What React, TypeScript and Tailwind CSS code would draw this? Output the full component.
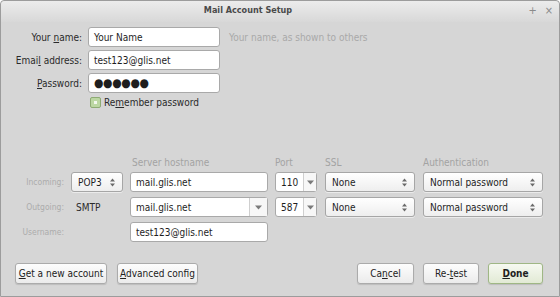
import React from "react";

const font = "font-['DejaVu_Sans_Condensed','Liberation_Sans',sans-serif]";

function UpDown() {
  return (
    <svg width="5" height="9" viewBox="0 0 5 9" aria-hidden="true">
      <path d="M2.5 0.5L5 3.5H0z" fill="#6a6a6a" />
      <path d="M2.5 8.5L5 5.5H0z" fill="#6a6a6a" />
    </svg>
  );
}

function Down() {
  return (
    <svg width="7" height="5" viewBox="0 0 7 5" aria-hidden="true">
      <path d="M0 0.5H7L3.5 4.5z" fill="#7a7a7a" />
    </svg>
  );
}

function Field({ value, className = "" }: { value: string; className?: string }) {
  return (
    <div
      className={`h-[20px] bg-white border border-[#a9a9a9] rounded-[3px] flex items-center px-[5px] text-[#1e1e1e] ${className}`}
    >
      {value}
    </div>
  );
}

function Select({ value, className = "" }: { value: string; className?: string }) {
  return (
    <div
      className={`h-[20px] bg-gradient-to-b from-white to-[#eeeeee] border border-[#a6a6a6] rounded-[3px] flex items-center justify-between pl-[6px] pr-[7px] text-[#1e1e1e] shadow-[0_1px_0_rgba(255,255,255,0.5)] ${className}`}
    >
      <span>{value}</span>
      <UpDown />
    </div>
  );
}

function Combo({ value, className = "", arrow = "w-[18px]" }: { value: string; className?: string; arrow?: string }) {
  return (
    <div
      className={`h-[20px] bg-white border border-[#a9a9a9] rounded-[3px] flex items-stretch text-[#1e1e1e] ${className}`}
    >
      <span className="flex-1 flex items-center px-[5px]">{value}</span>
      <span className={`${arrow} border-l border-[#cfcfcf] bg-[#f7f7f7] flex items-center justify-center`}>
        <Down />
      </span>
    </div>
  );
}

function Button({ children, className = "", done = false }: { children: React.ReactNode; className?: string; done?: boolean }) {
  return (
    <div
      className={`h-[21px] rounded-[3px] border flex items-center justify-center shadow-[0_1px_1px_rgba(0,0,0,0.12)] ${
        done
          ? "border-[#9fb785] bg-gradient-to-b from-[#f6f9f1] to-[#e2ead5] font-bold text-[#1e1e1e]"
          : "border-[#ababab] bg-gradient-to-b from-[#fdfdfd] to-[#ebebeb] text-[#222]"
      } ${className}`}
    >
      {children}
    </div>
  );
}

export default function App() {
  return (
    <div
      className={`w-[560px] h-[297px] bg-[#d6d6d6] border border-[#9c9c9c] rounded-t-[4px] flex flex-col text-[10px] ${font}`}
    >
      {/* Title bar */}
      <div className="h-[21px] shrink-0 rounded-t-[4px] bg-gradient-to-b from-[#ececec] to-[#d8d8d8] flex items-center relative">
        <div className="flex-1 text-center font-bold text-[9px] text-[#4a4a4a] pr-[64px] pb-[2px]">Mail Account Setup</div>
        <div className="absolute right-[6px] top-[2px] flex items-center gap-[8px] text-[#8a8a8a] text-[11px]">
          <span>+</span>
          <span>×</span>
        </div>
      </div>

      {/* Identity */}
      <div className="flex flex-col gap-[3px] mt-[5px]">
        <div className="flex items-center gap-[6px]">
          <label className="w-[81px] text-right text-[#2a2a2a]">
            Your <u>n</u>ame:
          </label>
          <Field value="Your Name" className="w-[132px]" />
          <span className="ml-[3px] text-[#a9a9a9]">Your name, as shown to others</span>
        </div>
        <div className="flex items-center gap-[6px]">
          <label className="w-[81px] text-right text-[#2a2a2a]">
            Emai<u>l</u> address:
          </label>
          <Field value="test123@glis.net" className="w-[132px]" />
        </div>
        <div className="flex items-center gap-[6px]">
          <label className="w-[81px] text-right text-[#2a2a2a]">
            <u>P</u>assword:
          </label>
          <Field value="●●●●●●" className="w-[132px] tracking-[-0.3px] text-[12px]" />
        </div>
        <div className="flex items-center gap-[3px] ml-[89px] -mt-[1px]">
          <span className="w-[11px] h-[11px] rounded-[2px] border border-[#8eab74] bg-[#bcd7a3] flex items-center justify-center">
            <span className="w-[3px] h-[3px] bg-[#f3f8ee]" />
          </span>
          <span className="text-[#2a2a2a]">
            Re<u>m</u>ember password
          </span>
        </div>
      </div>

      {/* Server settings */}
      <div className="flex flex-col mt-[46px]">
        <div className="flex items-center h-[12px] text-[#a3a3a3]">
          <span className="w-[130px]" />
          <span className="w-[144px] pl-[1px]">Server hostname</span>
          <span className="w-[49px]">Port</span>
          <span className="w-[98px] pl-[1px]">SSL</span>
          <span className="pl-[1px]">Authentication</span>
        </div>

        <div className="flex items-center gap-[7px] mt-[4px]">
          <span className="w-[63px] text-right text-[#acacac] text-[8.5px]">Incoming:</span>
          <Select value="POP3" className="w-[52px]" />
          <Field value="mail.glis.net" className="w-[138px]" />
          <Combo value="110" className="w-[42px]" arrow="w-[17px]" />
          <Select value="None" className="w-[90px] ml-[1px]" />
          <Select value="Normal password" className="w-[120px] ml-[1px]" />
        </div>

        <div className="flex items-center gap-[7px] mt-[5px]">
          <span className="w-[63px] text-right text-[#acacac] text-[8.5px]">Outgoing:</span>
          <span className="w-[52px] pl-[5px] text-[#2a2a2a]">SMTP</span>
          <Combo value="mail.glis.net" className="w-[138px]" />
          <Combo value="587" className="w-[42px]" arrow="w-[17px]" />
          <Select value="None" className="w-[90px] ml-[1px]" />
          <Select value="Normal password" className="w-[120px] ml-[1px]" />
        </div>

        <div className="flex items-center gap-[7px] mt-[5px]">
          <span className="w-[63px] text-right text-[#acacac] text-[8.5px]">Username:</span>
          <span className="w-[52px]" />
          <Field value="test123@glis.net" className="w-[138px]" />
        </div>
      </div>

      {/* Buttons */}
      <div className="flex items-center mt-[21px] pl-[14px] pr-[16px]">
        <Button className="w-[92px]">
          <span>
            <u>G</u>et a new account
          </span>
        </Button>
        <Button className="w-[81px] ml-[10px]">
          <span>
            <u>A</u>dvanced config
          </span>
        </Button>
        <div className="flex-1" />
        <Button className="w-[57px]">
          <span>
            Ca<u>n</u>cel
          </span>
        </Button>
        <Button className="w-[56px] ml-[9px]">
          <span>
            Re-<u>t</u>est
          </span>
        </Button>
        <Button className="w-[55px] ml-[9px]" done>
          <span>
            <u>D</u>one
          </span>
        </Button>
      </div>
    </div>
  );
}
